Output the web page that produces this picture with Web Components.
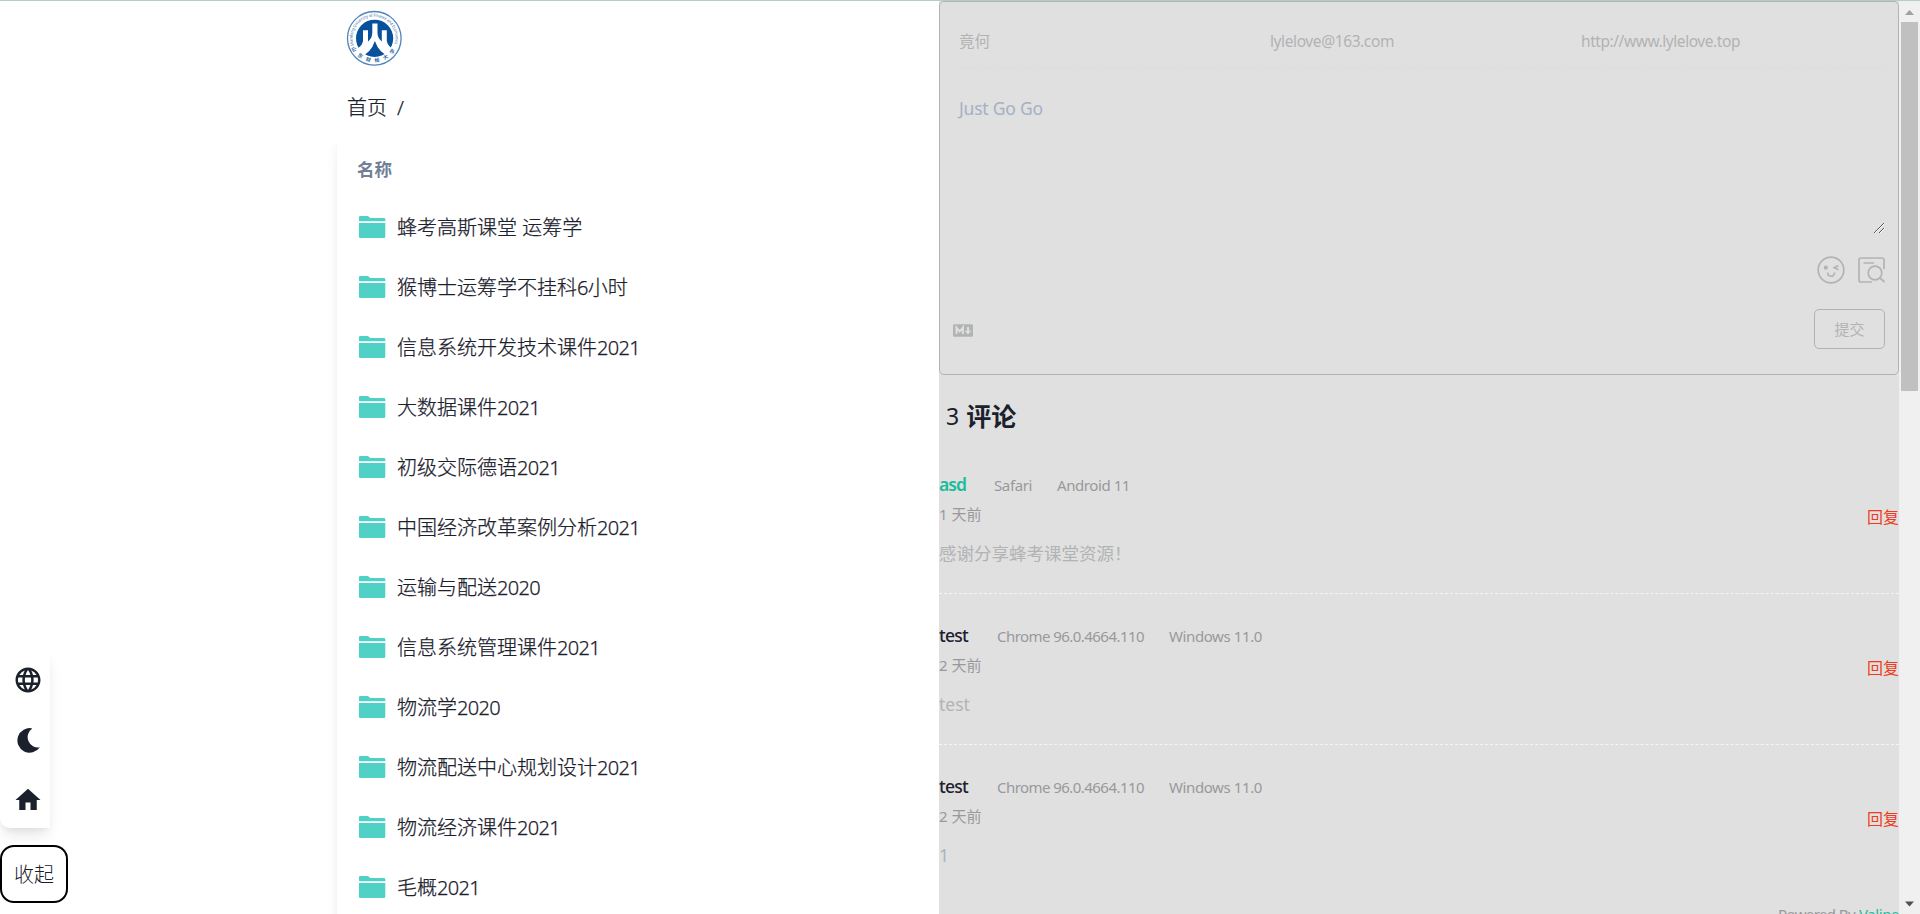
<!DOCTYPE html>
<html lang="zh-CN">
<head>
<meta charset="utf-8">
<title>首页</title>
<style>
html,body{margin:0;height:100%;overflow:hidden;background:#fff}
body{font-family:"Noto Sans","Noto Sans CJK SC",sans-serif;color:#1a202c}
</style>
</head>
<body>
<app-page></app-page>
<script>
const define=(name,html,setup)=>customElements.define(name,class extends HTMLElement{
  connectedCallback(){
    if(this.shadowRoot)return;
    const root=this.attachShadow({mode:'open'});
    const t=document.createElement('template');
    t.innerHTML=typeof html==='function'?html(this):html;
    root.appendChild(t.content.cloneNode(true));
    if(setup)setup(this,root);
  }
});

/* One line of text, tracked so that it spans the width given in "w". */
define('fit-text','<style>:host{display:inline-block;white-space:nowrap;flex:none}</style><span><slot></slot></span>',(el,root)=>{
  const w=+el.getAttribute('w'),n=[...el.textContent].length,s=root.querySelector('span');
  const natural=s.getBoundingClientRect().width;
  if(w&&natural)s.style.letterSpacing=((w-natural)/n).toFixed(3)+'px';
  el.style.width=w+'px';
});

define('school-logo',`<style>:host{display:block;width:56px;height:56px}svg{display:block}text{font-family:"Noto Sans","Noto Sans CJK SC",sans-serif;fill:#2c66a8}</style>
<svg width="56" height="56" viewBox="0 0 56 56">
<circle cx="28.300" cy="28.300" r="26.800" fill="#fff" stroke="#4f84bd" stroke-width="1.300"/>
<circle cx="28.600" cy="28.300" r="18.600" fill="#07519c"/>
<path d="M26.300 13.500h5.200V23q.3 5.500 4.300 8.500V20.300h5V31q1 6 9 9.500L44 47Q33 43 28.900 31 25 43 14 47L8 40.500Q16 37 17 31V20.300h5v11.200q4-3 4.300-8.500z" fill="#fff"/>
<defs><path id="up" d="M7.900 35.500A21.400 21.400 0 1 1 48.100 35.500"/><path id="down" d="M5.500 38A25 25 0 0 0 50.500 38"/></defs>
<text font-size="4.200" textLength="80" lengthAdjust="spacingAndGlyphs"><textPath href="#up">Shandong University of Finance and Economics</textPath></text>
<text font-size="5" font-weight="700" textLength="53" lengthAdjust="spacing"><textPath href="#down">山东财经大学</textPath></text>
</svg>`);

define('folder-row',el=>`<style>
:host{display:flex;align-items:center;height:60px;padding-left:20px;font-size:20px;font-weight:300;line-height:30px;white-space:nowrap;-webkit-text-stroke:.25px #1a202c}
svg{width:30px;height:30px;margin-right:10px;flex:none}span{letter-spacing:-.67px}</style>
<svg viewBox="0 .4 30 30"><path fill="#4fd1c5" d="M3.200 3.300h7.300q.8 0 1.200.6l.8 1q.4.4 1.200.4H27q1.300 0 1.300 1.400v2.000H2V4.500q0-1.200 1.200-1.200zM2 10.400h26.300v13.700q0 1.300-1.300 1.300H3.300Q2 25.400 2 24.100z"/></svg>
<div>${el.getAttribute('name').replace(/[0-9]+/g,'<span>$&</span>')}</div>`);

define('file-list',`<style>
:host{display:block;background:#fff;border-radius:10px;box-shadow:0 10px 15px -3px rgba(0,0,0,.1),0 4px 6px -2px rgba(0,0,0,.05);height:850px}
header{height:64px;box-sizing:border-box;padding:20px 0 0 20px;font-size:17.500px;line-height:30px;font-weight:700;color:#718096}</style>
<header>名称</header>`,(el,root)=>{
  ['蜂考高斯课堂 运筹学','猴博士运筹学不挂科6小时','信息系统开发技术课件2021','大数据课件2021','初级交际德语2021','中国经济改革案例分析2021','运输与配送2020','信息系统管理课件2021','物流学2020','物流配送中心规划设计2021','物流经济课件2021','毛概2021'].forEach(n=>{
    const r=document.createElement('folder-row');r.setAttribute('name',n);root.appendChild(r);});
});

define('side-tools',`<style>
:host{display:block;position:absolute;left:0;top:650px}
nav{width:50px;height:178px;box-sizing:border-box;border-radius:10px 0 0 10px;background:#fff;box-shadow:0 10px 15px -3px rgba(0,0,0,.1),0 4px 6px -2px rgba(0,0,0,.05);display:flex;flex-direction:column;align-items:center;padding:15px 0 0 6px;gap:30px}
svg{width:30px;height:30px;flex:none;fill:#1a202c}
button{display:block;margin:17px 0 0;width:68px;height:58px;padding:0;background:#fff;border:2px solid #000;border-radius:14px;font:300 20px/30px "Noto Sans CJK SC",sans-serif;color:#1a202c}</style>
<nav>
<svg viewBox="0 0 24 24"><path d="M11.990 2C6.470 2 2 6.480 2 12s4.470 10 9.990 10C17.520 22 22 17.520 22 12S17.520 2 11.990 2zm6.930 6h-2.950a15.650 15.650 0 0 0-1.380-3.560A8.030 8.030 0 0 1 18.920 8zM12 4.040c.83 1.200 1.480 2.530 1.910 3.960h-3.820c.43-1.430 1.080-2.760 1.910-3.960zM4.260 14C4.100 13.360 4 12.690 4 12s.1-1.360.26-2h3.380c-.08.66-.14 1.320-.14 2s.06 1.340.14 2H4.260zm.82 2h2.950c.32 1.250.78 2.450 1.380 3.560A7.987 7.987 0 0 1 5.080 16zm2.950-8H5.080a7.987 7.987 0 0 1 4.330-3.560A15.650 15.650 0 0 0 8.030 8zM12 19.960c-.83-1.200-1.480-2.530-1.910-3.960h3.820c-.43 1.430-1.080 2.760-1.910 3.960zM14.340 14H9.660c-.09-.66-.16-1.320-.16-2s.07-1.350.16-2h4.680c.09.65.16 1.320.16 2s-.07 1.340-.16 2zm.25 5.560c.6-1.110 1.060-2.310 1.380-3.560h2.950a8.030 8.030 0 0 1-4.330 3.560zM16.360 14c.08-.66.14-1.320.14-2s-.06-1.340-.14-2h3.380c.16.640.26 1.310.26 2s-.1 1.360-.26 2h-3.380z"/></svg>
<svg viewBox="0 0 30 30"><path d="M19.300 3.400A12.300 12.300 0 1 0 26.900 22.300A10.400 10.400 0 0 1 19.300 3.400z"/></svg>
<svg viewBox="0 0 24 24"><path d="M10 20v-6h4v6h5v-8h3L12 3 2 12h3v8z"/></svg>
</nav><button>收起</button>`);

define('comment-form',`<style>
:host{display:block;box-sizing:border-box;height:374px;border:1px solid #b1b3b3;border-radius:5px;padding:0 13px 0 19px;color:#b2b3b4}
.in{display:grid;grid-template-columns:311px 311px 1fr;height:66px;align-items:center;border-bottom:1px dashed #dcdcdd;font-size:15.500px;line-height:24px;box-sizing:border-box;padding-top:13px}
.area{height:166px;box-sizing:border-box;padding-top:27px;font-size:17.500px;line-height:26px;color:#a4b1c5;display:flex;justify-content:space-between}
.grip{align-self:flex-end;width:12px;height:12px}
.tools{display:flex;justify-content:flex-end;gap:11px;height:30px;margin-top:21px}
.tools svg{width:30px;height:30px;fill:none;stroke:#b2b3b4;stroke-width:1.700;margin-right:-1px}
.foot{display:flex;align-items:flex-start;justify-content:space-between;margin-top:24px}
.foot svg{margin:15px 0 0 -6px}
button{width:71px;height:40px;background:none;border:1px solid #b1b3b3;border-radius:5px;color:#b1b3b3;font:15px/24px "Noto Sans CJK SC",sans-serif;padding:0}</style>
<div class="in"><span>竟何</span><fit-text w="124">lylelove@163.com</fit-text><fit-text w="159">http://www.lylelove.top</fit-text></div>
<div class="area"><fit-text w="84">Just Go Go</fit-text><svg class="grip" viewBox="0 0 12 12" stroke-width="1"><path stroke="#fff" fill="none" d="M2 11L11.500 1.500M7 11l4.500-4.500"/><path stroke="#555" fill="none" d="M1 11L11 1M6 11l5-5"/></svg></div>
<div class="tools">
<svg viewBox="0 0 30 30"><circle cx="15" cy="15" r="12.800"/><circle cx="9.800" cy="12.700" r="2.100" fill="#b2b3b4" stroke="none"/><path d="M22.500 10.500l-4.300 2.200 4.300 2M11.700 17.500c0 5 6.800 5 6.800 0"/></svg>
<svg viewBox="0 0 30 30"><path d="M28 14V5q0-2-2-2H5Q3 3 3 5v20q0 2 2 2h11M7.500 8H18M24 23l4.500 4"/><circle cx="19" cy="18" r="6.800"/></svg>
</div>
<div class="foot"><svg width="20" height="13" viewBox="0 0 20 13"><rect y=".3" width="20" height="12.400" rx="1.200" fill="#b2b3b4"/><path fill="none" stroke="#e0e0e0" stroke-width="2" d="M3.500 10V3.500l3.200 4 3.200-4V10M15 3v5"/><path fill="#e0e0e0" d="M11.800 6.800h6.400L15 10.500z"/></svg><button>提交</button></div>`);

define('comment-item',el=>{const a=n=>el.getAttribute(n)||'';return `<style>
:host{display:block;box-sizing:border-box;height:151px;border-bottom:1px dashed #f5f5f5;padding-top:29px}
:host([last]){border-color:transparent;height:150px}
.head{display:flex;align-items:baseline;line-height:24px;height:30px;font-size:15px;color:#99999b}
.nick{font-size:17.500px;font-weight:${a('color')?600:500};color:${a('color')||'#1a202c'};margin-right:${a('gap')}px}
.os{margin-left:25px}
.meta{display:flex;justify-content:space-between;line-height:24px;font-size:15px;color:#99999b}
.meta b{font-weight:400;font-size:16px;color:#f03a1c;padding-top:3px}
.body{font-size:17.500px;line-height:26px;margin-top:11px;color:#b2b3b4;height:26px}</style>
<div class="head"><fit-text class="nick" w="${a('nw')}">${a('nick')}</fit-text><fit-text w="${a('bw')}">${a('browser')}</fit-text><fit-text class="os" w="${a('ow')}">${a('os')}</fit-text></div>
<div class="meta"><span>${a('time')}</span><b>回复</b></div><div class="body"><slot></slot></div>`});

define('comment-panel',`<style>
:host{display:block;position:absolute;left:939px;top:1px;width:960px;height:913px;background:#e0e0e0;overflow:hidden}
h3{margin:0;height:68px;padding:23px 0 0 7px;box-sizing:border-box;font-size:25px;line-height:36px;display:flex;gap:7px}
h3 span{font-size:23px;font-weight:400}
footer{display:flex;justify-content:flex-end;gap:4px;font-size:15px;line-height:24px;color:#99999b;margin-top:7px}i{font-style:normal;color:#1abc9c}</style>
<comment-form></comment-form>
<h3><span>3</span>评论</h3>
<comment-item nick="asd" color="#1abc9c" nw="27" gap="28" browser="Safari" bw="38" os="Android 11" ow="73" time="1 天前">感谢分享蜂考课堂资源！</comment-item>
<comment-item nick="test" nw="29" gap="29" browser="Chrome 96.0.4664.110" bw="147" os="Windows 11.0" ow="93" time="2 天前">test</comment-item>
<comment-item last nick="test" nw="29" gap="29" browser="Chrome 96.0.4664.110" bw="147" os="Windows 11.0" ow="93" time="2 天前">1</comment-item>
<footer><fit-text w="77">Powered By</fit-text><i><fit-text w="40">Valine</fit-text></i></footer>`);

define('scroll-bar',`<style>
:host{display:flex;flex-direction:column;position:absolute;right:0;top:1px;width:21px;height:913px;background:#f0f0f0}
svg{width:21px;height:21px;flex:none}div{height:369px;width:17px;margin-left:2px;background:#c0c0c0}.d{margin-top:auto}</style>
<svg viewBox="0 0 21 21"><path fill="#a0a0a0" d="M6 14l4.500-5 4.500 5z"/></svg><div></div><svg class="d" viewBox="0 0 21 21"><path fill="#505050" d="M6 8.500l4.500 5 4.500-5z"/></svg>`);

define('app-page',`<style>
:host{display:block;position:relative;width:1920px;height:914px;overflow:hidden;border-top:1px solid #b5ccc9;box-sizing:border-box}
main{width:1246px;margin-left:337px}
school-logo{padding:9px 0 0 9px}
.crumb{display:flex;gap:10px;height:68px;box-sizing:border-box;padding:27px 0 0 10px;font-size:20px;line-height:30px;font-weight:300;-webkit-text-stroke:.25px #1a202c}
comment-panel,scroll-bar,side-tools{margin-top:-1px}</style>
<main><school-logo></school-logo><div class="crumb"><span>首页</span><span>/</span></div><file-list></file-list></main>
<comment-panel></comment-panel><scroll-bar></scroll-bar><side-tools></side-tools>`);
</script>
</body>
</html>
